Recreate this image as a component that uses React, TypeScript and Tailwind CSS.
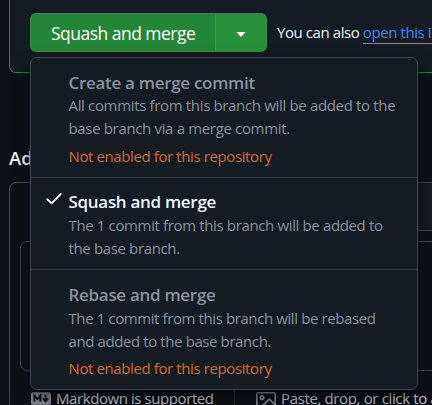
import React from 'react';

type Option = {
  title: string;
  lines: string[];
  note?: string;
  selected?: boolean;
  box: string;
  body: string;
};

const options: Option[] = [
  {
    title: 'Create a merge commit',
    lines: ['All commits from this branch will be added to the', 'base branch via a merge commit.'],
    note: 'Not enabled for this repository',
    box: 'h-[119px] pt-[14px]',
    body: 'mb-[6px] tracking-[-0.34px]',
  },
  {
    title: 'Squash and merge',
    lines: ['The 1 commit from this branch will be added to', 'the base branch.'],
    selected: true,
    box: 'h-[92px] pt-[13px] border-t border-[#343b44]',
    body: 'mt-[1px] tracking-[-0.36px]',
  },
  {
    title: 'Rebase and merge',
    lines: ['The 1 commit from this branch will be rebased', 'and added to the base branch.'],
    note: 'Not enabled for this repository',
    box: 'h-[120px] pt-[14px] border-t border-[#343b44]',
    body: 'mt-[1px] mb-[5px] tracking-[-0.4px]',
  },
];

function MergeMenu() {
  return (
    <div className="absolute left-[30px] top-[57px] h-[333px] w-[388px] overflow-hidden rounded-[7px] border border-[#3d444d] bg-[#151b23] shadow-[0_6px_16px_rgba(1,4,9,0.6)]">
      {options.map((o) => (
        <div key={o.title} className={`relative pl-[37.5px] whitespace-nowrap ${o.box}`}>
          {o.selected && (
            <svg className="absolute left-[15px] top-[14px]" width="17" height="14" viewBox="0 0 17 14" fill="none" stroke="#f0f6fc" strokeWidth="1.9" strokeLinecap="round" strokeLinejoin="round">
              <path d="M1.3 7.3 L5.6 11.3 L14.7 2" />
            </svg>
          )}
          <div className={`text-[17px] leading-[22px] font-semibold tracking-[-0.3px] ${o.selected ? 'text-[#f0f6fc]' : 'text-[#8b929b]'}`}>
            {o.title}
          </div>
          <div className={`text-[15px] leading-[22.5px] text-[#8a919b] ${o.body}`}>
            {o.lines.map((l) => (
              <div key={l}>{l}</div>
            ))}
          </div>
          {o.note && <div className="text-[15px] leading-[22px] tracking-[-0.39px] text-[#d76a2d]">{o.note}</div>}
        </div>
      ))}
    </div>
  );
}

export default function App() {
  return (
    <div className="relative h-[405px] w-[432px] overflow-hidden bg-[#0d1117] font-['Open_Sans','Noto_Sans',sans-serif] text-[#f0f6fc]">
      <div className="ml-[9px] flex h-[73px] w-[460px] rounded-bl-[7px] border-b border-l border-[#2b7f38] bg-[#151b23] pl-5 pt-[13px]">
        <div className="flex h-[39px] w-[237px] shrink-0 overflow-hidden rounded-[6px] border border-[#2f8f40] bg-[#238636]">
          <div className="w-[184px] shrink-0 pl-[20px] text-[17.5px] leading-[39px] tracking-[-0.52px] whitespace-nowrap text-white">Squash and merge</div>
          <div className="flex flex-1 items-center justify-center border-l border-[#3b994a] bg-[#29903b] pt-[3px]">
            <svg width="10" height="5" viewBox="0 0 10 5" fill="#fff"><path d="M0.3 0H9.7L5 5Z" /></svg>
          </div>
        </div>
        <div className="ml-[10px] text-[15px] leading-[38px] tracking-[-0.42px] whitespace-nowrap">
          You can also <span className="inline-block h-[31px] border-b border-[#4493f8] text-[#4488ed]">open this in</span>
        </div>
      </div>
      <div className="ml-[9px] mt-[73px] h-[24px] text-[18.5px] leading-[24px] font-semibold tracking-[0px]">Add a comment</div>
      <div className="ml-[9px] mt-[12px] h-[260px] w-[460px] rounded-tl-[7px] border-l border-t border-[#3d444d]">
        <div className="flex h-[48px]">
          <div className="w-[80px]" />
          <div className="flex-1 border-b border-[#3d444d] bg-[#151b23]" />
        </div>
        <div className="ml-[10px] mt-[10px] h-[130px] rounded-l-[7px] border border-[#3d444d]" />
        <div className="ml-[21px] mt-[15px] flex h-[24px] items-center text-[15px] leading-[24px] whitespace-nowrap text-[#c6ccd4]">
          <svg className="mt-[1px] shrink-0" width="20" height="13" viewBox="0 0 21 13"><rect width="21" height="13" rx="1.8" fill="#858d97" /><path d="M3.5 10V3.5L6.7 7.2 9.9 3.5V10M15.2 2.6V9M12.3 6.4L15.2 9.6 18.1 6.4" fill="none" stroke="#0d1117" strokeWidth="2" /></svg>
          <span className="ml-[5px] w-[178px] shrink-0 tracking-[-0.42px]">Markdown is supported</span>
          <span className="h-[22px] w-px shrink-0 bg-[#252b33]" />
          <svg className="ml-[21px] mt-[6px] shrink-0" width="20" height="18" viewBox="0 0 20 18" fill="none" stroke="#858d97" strokeWidth="1.6"><rect x="0.8" y="0.8" width="18.4" height="16.4" rx="1.5" /><circle cx="6" cy="5.6" r="1.8" /><path d="M3 17L13.3 7.2L19 12.8" /></svg>
          <span className="ml-[5px] shrink-0 tracking-[-0.36px]">Paste, drop, or click to add files</span>
        </div>
      </div>
      <MergeMenu />
    </div>
  );
}
